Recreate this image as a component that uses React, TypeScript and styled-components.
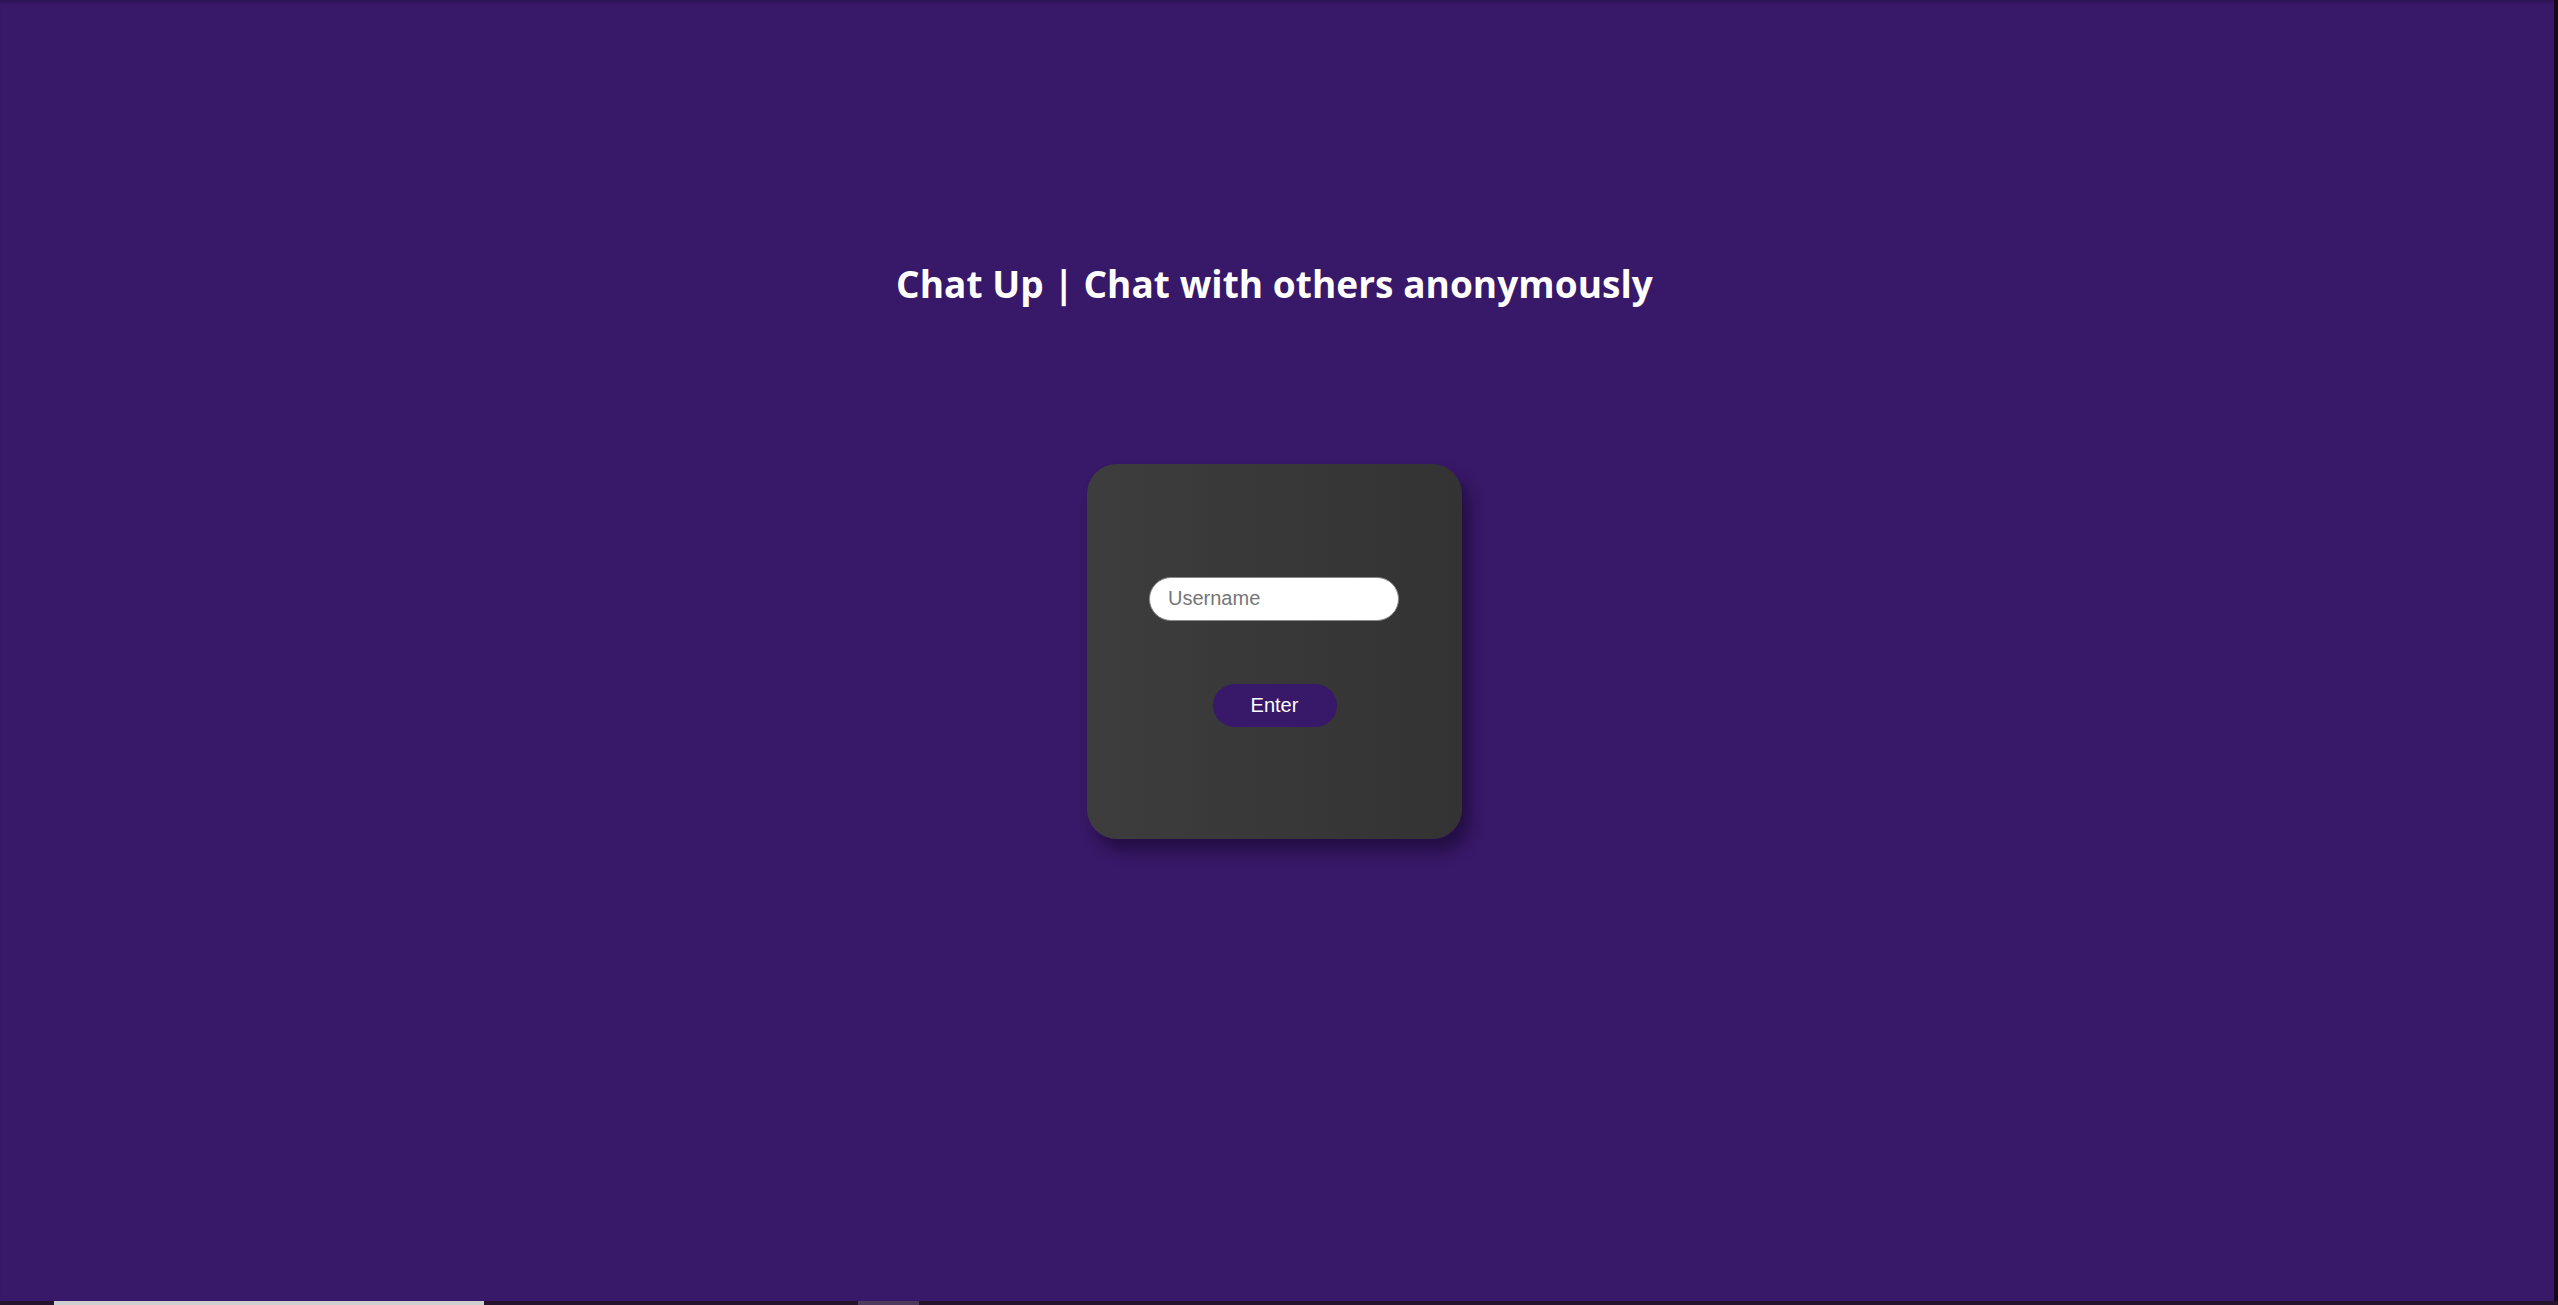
import React from "react";
import styled, { createGlobalStyle } from "styled-components";

const GlobalStyle = createGlobalStyle`
  html, body {
    margin: 0;
    padding: 0;
    height: 100%;
    background: #381868;
  }
  #root {
    height: 100%;
  }
  * { box-sizing: border-box; }
`;

const Screen = styled.div`
  height: 100vh;
  display: flex;
  flex-direction: column;
  overflow: hidden;
  box-shadow: inset -4px 0 0 #120a1c, inset 0 4px 4px -3px rgba(0, 0, 0, 0.35);
`;

const Page = styled.main`
  flex: 1;
  display: flex;
  flex-direction: column;
  align-items: center;
  padding-top: 260px;
  padding-right: 9px;
`;

const Title = styled.h1`
  margin: 0;
  font-family: "Open Sans", "Noto Sans", sans-serif;
  font-weight: 700;
  font-size: 37px;
  line-height: 48px;
  color: #ffffff;
  letter-spacing: 0.05px;
`;

const Card = styled.section`
  margin-top: 156px;
  width: 375px;
  height: 375px;
  border-radius: 30px;
  background: linear-gradient(90deg, #3d3d3d 0%, #333333 100%);
  box-shadow: 8px 12px 14px rgba(20, 8, 40, 0.55);
  display: flex;
  flex-direction: column;
  align-items: center;
  justify-content: center;
  gap: 63px;
  padding-right: 1px;
`;

const UsernameInput = styled.input`
  width: 250px;
  height: 44px;
  border-radius: 22px;
  border: 1px solid #8a8a8a;
  background: #ffffff;
  padding: 0 18px;
  font-family: "Liberation Sans", Arial, sans-serif;
  font-size: 20px;
  color: #222;
  outline: none;
  &::placeholder {
    color: #767676;
  }
`;

const EnterButton = styled.button`
  width: 124px;
  height: 43px;
  border-radius: 22px;
  border: none;
  background: #381868;
  color: #ffffff;
  font-family: "Liberation Sans", Arial, sans-serif;
  font-size: 20px;
  cursor: pointer;
  margin-left: 1px;
`;

const BottomStrip = styled.div`
  height: 4px;
  flex: none;
  background: #26142e;
  display: flex;
  align-items: stretch;
  padding-left: 54px;
`;

const Thumb = styled.div<{ $w: number; $bg: string; $ml?: number }>`
  width: ${(p) => p.$w}px;
  margin-left: ${(p) => p.$ml ?? 0}px;
  background: ${(p) => p.$bg};
`;

export default function App() {
  return (
    <>
      <GlobalStyle />
      <Screen>
        <Page>
          <Title>Chat Up | Chat with others anonymously</Title>
          <Card>
            <UsernameInput placeholder="Username" />
            <EnterButton>Enter</EnterButton>
          </Card>
        </Page>
        <BottomStrip>
          <Thumb $w={430} $bg="#cfcfcf" />
          <Thumb $w={61} $bg="#4e3a5c" $ml={374} />
        </BottomStrip>
      </Screen>
    </>
  );
}
